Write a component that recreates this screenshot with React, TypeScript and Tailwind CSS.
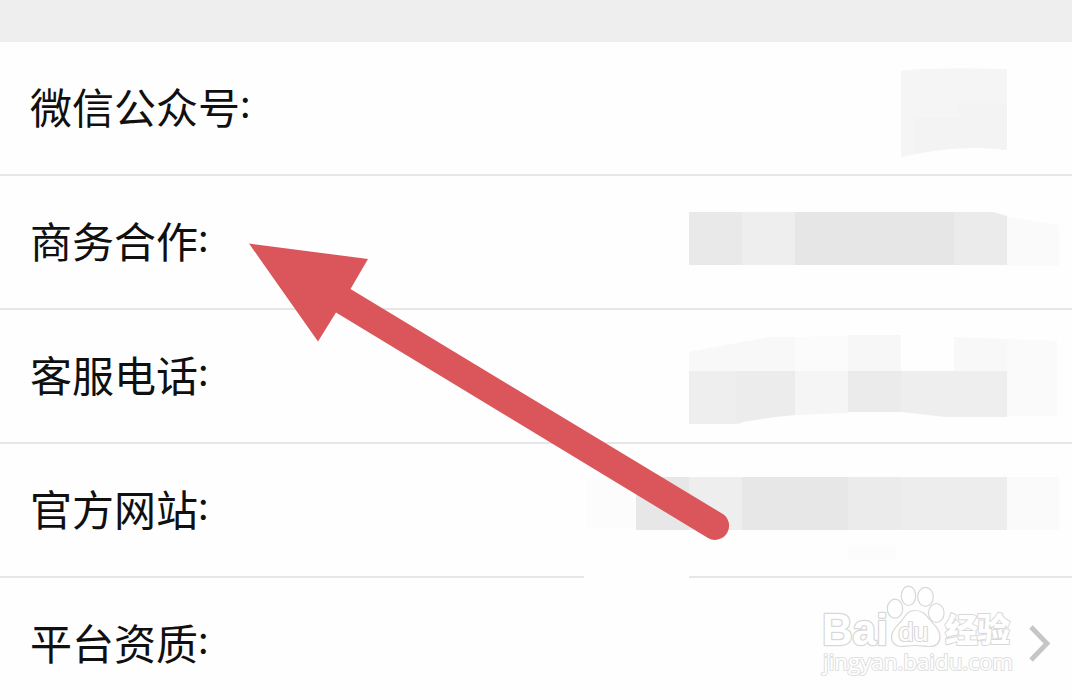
import type { ReactNode } from 'react';

type Block = { d: string; fill: string };

type Item = {
  label: string;
  blocks?: Block[];
};

const items: Item[] = [
  {
    label: '微信公众号',
    blocks: [
      { d: 'M341 29 Q370 25 447 27 V108 Q400 102 341 115Z', fill: '#f5f5f5' },
      { d: 'M399 61 H447 V108 Q400 102 355 112 V76 H399Z', fill: '#f3f3f3' },
    ],
  },
  {
    label: '商务合作',
    blocks: [
      { d: 'M447 41 L499 49 V90 H447Z', fill: '#fafafa' },
      { d: 'M129 36 H182 V89 H129Z', fill: '#e9e9e9' },
      { d: 'M182 36 H235 V89 H182Z', fill: '#eeeeee' },
      { d: 'M235 36 H394 V89 H235Z', fill: '#e6e6e6' },
      { d: 'M394 36 H433 L447 40 V89 H394Z', fill: '#ebebeb' },
    ],
  },
  {
    label: '客服电话',
    blocks: [
      { d: 'M129 42 L144 39 L182 32 L209 27 L235 27 V61 H129Z', fill: '#f8f8f8' },
      { d: 'M235 27 L288 26 V61 H235Z', fill: '#fbfbfb' },
      { d: 'M288 25 H341 V61 H288Z', fill: '#f7f7f7' },
      { d: 'M394 27 L447 29 V61 H394Z', fill: '#f8f8f8' },
      { d: 'M447 29 L497 31 V106 H447Z', fill: '#fafafa' },
      { d: 'M129 61 H182 V113 L176 114 H129Z', fill: '#eeeeee' },
      { d: 'M176 61 H235 V105 L216 107 L176 113Z', fill: '#ececec' },
      { d: 'M235 61 H288 V103 L235 105Z', fill: '#f5f5f5' },
      { d: 'M288 61 H341 V102 H288Z', fill: '#ebebeb' },
      { d: 'M341 61 H447 V107 H385 L341 102Z', fill: '#eeeeee' },
    ],
  },
  {
    label: '官方网站',
    blocks: [
      { d: 'M24 100 H129 V134 H24Z', fill: '#fefefe' },
      { d: 'M27 34 H76 V84 H27Z', fill: '#fcfcfc' },
      { d: 'M76 33 H129 V86 H76Z', fill: '#e7e7e7' },
      { d: 'M129 33 H182 V86 H129Z', fill: '#eeeeee' },
      { d: 'M182 33 H288 V86 H182Z', fill: '#e7e7e7' },
      { d: 'M288 33 H341 V86 H288Z', fill: '#ebebeb' },
      { d: 'M341 33 H447 V86 H341Z', fill: '#ededed' },
      { d: 'M447 33 H499 V86 H447Z', fill: '#fafafa' },
      { d: 'M288 101 H336 V116 H288Z', fill: '#fcfcfc' },
    ],
  },
];

const Mosaic = ({ blocks }: { blocks: Block[] }) => (
  <svg width="512" height="134" viewBox="0 0 512 134" className="shrink-0 -mb-0.5">
    {blocks.map((b) => (
      <path key={b.d} d={b.d} fill={b.fill} />
    ))}
  </svg>
);

const Row = ({ label, children }: { label: string; children?: ReactNode }) => (
  <li className="flex h-[134px] items-start justify-between border-b-2 border-[#e6e6e6] pl-[30px]">
    <span className="flex pt-[33px] text-[42px] leading-[62px] whitespace-nowrap text-[#101010]">
      {label}
      <span className="-mt-1 text-[38px]">:</span>
    </span>
    {children}
  </li>
);

const Watermark = () => (
  <svg
    width="200"
    height="110"
    viewBox="820 582 200 110"
    fill="#fff"
    stroke="#d8d8d8"
    strokeWidth="1.2"
    strokeLinejoin="round">
    <text
      x="822"
      y="645"
      fontSize="44"
      fontWeight="700"
      textLength="66"
      lengthAdjust="spacingAndGlyphs"
      fontFamily="Liberation Sans, sans-serif"
      strokeWidth="2.600"
      paintOrder="stroke">
      Bai
    </text>
    <text
      x="945"
      y="641.500"
      fontSize="33"
      fontWeight="900"
      textLength="65"
      fontFamily="Noto Sans CJK SC, sans-serif"
      strokeWidth="2"
      paintOrder="stroke">
      经验
    </text>
    <ellipse cx="895" cy="608.700" rx="7.700" ry="9.500" />
    <ellipse cx="908.500" cy="595.800" rx="7.200" ry="9.700" />
    <ellipse cx="925.500" cy="596.800" rx="7.800" ry="9.500" />
    <ellipse cx="936.300" cy="613" rx="7.800" ry="9.500" />
    <path d="M915 610.500 C907 610.500 905 617 901 621.500 C897 626 891.500 630 891.500 637 C891.500 643 896 646.500 901 646.500 C906 646.500 909 645.500 915 645.500 C921 645.500 925 646.500 930 646.500 C936 646.500 940 643 940 636 C940 629 934 625 930 620 C926 615 923 610.500 915 610.500Z" />
    <text
      x="898.500"
      y="640.500"
      fontSize="25"
      textLength="30"
      lengthAdjust="spacingAndGlyphs"
      fontFamily="Liberation Sans, sans-serif"
      strokeWidth="2.200"
      paintOrder="stroke">
      du
    </text>
    <text
      x="823"
      y="670"
      fontSize="21"
      textLength="190"
      lengthAdjust="spacingAndGlyphs"
      fontFamily="Open Sans, sans-serif"
      strokeWidth="2"
      stroke="#e0e0e0"
      paintOrder="stroke">
      jingyan.baidu.com
    </text>
  </svg>
);

const Chevron = () => (
  <svg width="24" height="40" viewBox="0 0 24 40" fill="none">
    <path d="M3 3 L19 19.500 L3 36" stroke="#c6c6c6" strokeWidth="4.800" />
  </svg>
);

const Arrow = () => (
  <svg
    width="1072"
    height="700"
    viewBox="0 0 1072 700"
    className="pointer-events-none absolute top-0 left-0">
    <path
      d="M249 243.500 L368 259 L350.500 289 L722 513.500 A14 14 0 0 1 708 538 L336 312.500 L318 341.500Z"
      fill="#db565b"
    />
  </svg>
);

export default function App() {
  return (
    <main className="relative h-[700px] w-[1072px] overflow-hidden bg-[#fefefe] font-['Noto_Sans_CJK_SC',sans-serif]">
      <div className="h-[42px] bg-[#eeeeee]" />
      <ul>
        {items.map((item) => (
          <Row key={item.label} label={item.label}>
            {item.blocks && <Mosaic blocks={item.blocks} />}
          </Row>
        ))}
        <Row label="平台资质">
          <div className="flex items-start gap-2 pt-1 pr-5">
            <Watermark />
            <div className="pt-[42px]">
              <Chevron />
            </div>
          </div>
        </Row>
      </ul>
      <Arrow />
    </main>
  );
}
